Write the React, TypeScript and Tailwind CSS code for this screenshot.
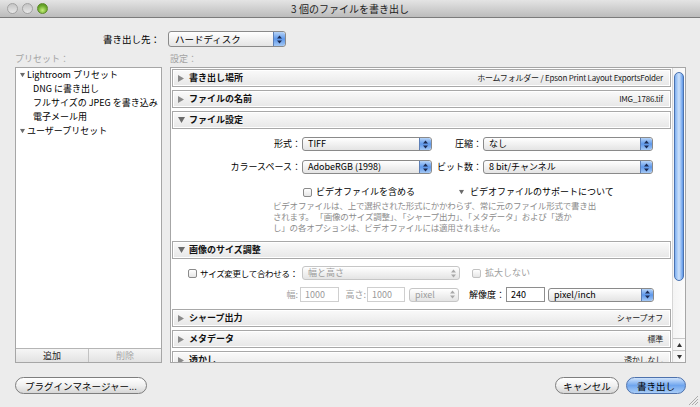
import React from "react";

function Tri({ open, className = "" }: { open?: boolean; className?: string }) {
  return open ? (
    <svg width="7" height="6" viewBox="0 0 7 6" className={className}>
      <path d="M0 0 H7 L3.5 6 Z" fill="#6b6b6b" />
    </svg>
  ) : (
    <svg width="6" height="7" viewBox="0 0 6 7" className={className}>
      <path d="M0 0 L6 3.5 L0 7 Z" fill="#8a8a8a" />
    </svg>
  );
}

function Stepper({ disabled }: { disabled?: boolean }) {
  const c = disabled ? "#a8a8a8" : "#1b2a52";
  return (
    <div
      className={
        disabled
          ? "flex h-full w-[12px] items-center justify-center"
          : "flex h-full w-[12px] items-center justify-center rounded-r-[2px] border-l border-[#5d7fb6] bg-gradient-to-b from-[#b7d4f7] via-[#5d97ea] to-[#a4c8f4]"
      }
    >
      <svg width="5" height="9" viewBox="0 0 5 9">
        <path d="M2.5 0.5 L5 3.5 H0 Z" fill={c} />
        <path d="M0 5.5 H5 L2.5 8.5 Z" fill={c} />
      </svg>
    </div>
  );
}

function Select({ value, className, disabled }: { value: string; className: string; disabled?: boolean }) {
  return (
    <div
      className={`flex h-[14px] shrink-0 items-center overflow-hidden rounded-[3px] border bg-gradient-to-b from-white to-[#e4e4e4] ${
        disabled ? "border-[#c6c6c6] text-[#9c9c9c]" : "border-[#8a8a8a] text-black"
      } ${className}`}
    >
      <span className="flex-1 truncate pl-[5px] text-[9px] leading-[12px]">{value}</span>
      <Stepper disabled={disabled} />
    </div>
  );
}

function Check({ disabled }: { disabled?: boolean }) {
  return (
    <div
      className={`h-[9px] w-[9px] shrink-0 rounded-[2px] border bg-gradient-to-b from-white to-[#e6e6e6] ${
        disabled ? "border-[#c2c2c2]" : "border-[#8a8a8a]"
      }`}
    />
  );
}

function Field({ value, className, disabled }: { value: string; className: string; disabled?: boolean }) {
  return (
    <div
      className={`flex h-[15px] shrink-0 items-center border bg-white pl-[4px] text-[9px] ${
        disabled ? "border-[#cfcfcf] text-[#9a9a9a]" : "border-[#8e8e8e] text-black"
      } ${className}`}
    >
      {value}
    </div>
  );
}

function Header({ title, right, open }: { title: string; right?: string; open?: boolean }) {
  return (
    <div className="flex h-[18px] shrink-0 items-center border border-[#a8a8a8] bg-gradient-to-b from-[#fafafa] to-[#e7e7e7] pl-[5px] pr-[7px] shadow-[inset_0_0_0_1px_#ffffff]">
      <div className="flex w-[11px] items-center">
        <Tri open={open} />
      </div>
      <span className="text-[9px] font-bold leading-[12px] text-[#111]">{title}</span>
      {right && <span className="ml-auto text-[8px] leading-[12px] tracking-[-0.2px] text-[#222]">{right}</span>}
    </div>
  );
}

function Pill({ children, className }: { children: React.ReactNode; className: string }) {
  return (
    <div
      className={`flex h-[17px] items-center justify-center rounded-full border text-[9.5px] leading-[12px] ${className}`}
    >
      {children}
    </div>
  );
}

export default function App() {
  return (
    <div className="relative flex h-[407px] w-[700px] flex-col overflow-hidden whitespace-nowrap bg-[#ececec] font-['Noto_Sans_CJK_JP','Noto_Sans',sans-serif] text-black">
      {/* title bar */}
      <div className="relative flex h-[18px] shrink-0 items-center justify-center border-b border-[#7b7b7b] bg-gradient-to-b from-[#e4e4e4] to-[#bcbcbc]">
        <div className="absolute left-[7px] top-[3px] flex gap-[4px]">
          <div className="h-[11px] w-[11px] rounded-full border border-[#a2a2a2] bg-gradient-to-b from-[#c4c4c4] to-[#e8e8e8]" />
          <div className="h-[11px] w-[11px] rounded-full border border-[#a2a2a2] bg-gradient-to-b from-[#c4c4c4] to-[#e8e8e8]" />
          <div className="h-[11px] w-[11px] rounded-full border border-[#5e8a2a] bg-[radial-gradient(circle_at_50%_70%,#c6f07a,#6aa82a_60%,#4f8a1e)]" />
        </div>
        <span className="text-[10px] leading-[12px] text-[#222]">3&nbsp;個のファイルを書き出し</span>
      </div>

      {/* destination */}
      <div className="mt-[13px] flex h-[16px] items-center">
        <span className="w-[162px] pr-[2px] text-right text-[9.5px] leading-[12px]">書き出し先：</span>
        <div className="ml-[6px] flex h-[16px] w-[118px] items-center overflow-hidden rounded-[3px] border border-[#8a8a8a] bg-gradient-to-b from-white to-[#e4e4e4]">
          <span className="flex-1 pl-[6px] text-[9.5px] leading-[12px]">ハードディスク</span>
          <Stepper />
        </div>
      </div>

      {/* labels */}
      <div className="flex h-[20px] pt-[6px] text-[9px] leading-[12px] text-[#a3a3a3]">
        <span className="ml-[15px] w-[155px]">プリセット：</span>
        <span>設定：</span>
      </div>

      {/* panels */}
      <div className="flex h-[296px] gap-[8px] pl-[15px]">
        {/* left */}
        <div className="flex w-[147px] flex-col border border-[#a6a6a6] bg-white">
          <div className="flex-1 text-[9px] leading-[14px]">
            <div className="flex items-center pl-[3px]">
              <Tri open className="mr-[1px] scale-75" />
              <span>Lightroom プリセット</span>
            </div>
            <div className="pl-[17px]">DNG に書き出し</div>
            <div className="pl-[17px]">フルサイズの JPEG を書き込み</div>
            <div className="pl-[17px]">電子メール用</div>
            <div className="flex items-center pl-[3px]">
              <Tri open className="mr-[1px] scale-75" />
              <span>ユーザープリセット</span>
            </div>
          </div>
          <div className="flex h-[14px] border-t border-[#b5b5b5] bg-gradient-to-b from-[#f6f6f6] to-[#e2e2e2] text-[9px] leading-[12px]">
            <div className="flex w-[73px] items-center justify-center border-r border-[#c2c2c2] text-[#222]">追加</div>
            <div className="flex flex-1 items-center justify-center text-[#a6a6a6]">削除</div>
          </div>
        </div>

        {/* right */}
        <div className="flex w-[516px] border border-[#a6a6a6] bg-white">
          <div className="flex w-[500px] flex-col gap-[3px] overflow-hidden pl-[1px] pt-[1px]">
            <Header title="書き出し場所" right="ホームフォルダー / Epson Print Layout ExportsFolder" />
            <Header title="ファイルの名前" right="IMG_1786.tif" />
            <div className="flex flex-col">
              <Header title="ファイル設定" open />
              <div className="flex h-[109px] flex-col text-[9px] leading-[12px]">
                <div className="mt-[8px] flex items-center">
                  <span className="w-[130px] pr-[1px] text-right">形式：</span>
                  <Select value="TIFF" className="w-[130px]" />
                  <span className="w-[51px] pr-[1px] text-right">圧縮：</span>
                  <Select value="なし" className="w-[170px]" />
                </div>
                <div className="mt-[9px] flex items-center">
                  <span className="w-[130px] pr-[1px] text-right">カラースペース：</span>
                  <Select value="AdobeRGB (1998)" className="w-[130px]" />
                  <span className="w-[51px] pr-[1px] text-right">ビット数：</span>
                  <Select value="8 bit/チャンネル" className="w-[170px]" />
                </div>
                <div className="mt-[12px] flex h-[12px] items-center">
                  <div className="ml-[131px] flex items-center gap-[4px]">
                    <Check />
                    <span>ビデオファイルを含める</span>
                  </div>
                  <div className="ml-[43px] flex items-center gap-[5px]">
                    <Tri open className="scale-75" />
                    <span>ビデオファイルのサポートについて</span>
                  </div>
                </div>
                <div className="ml-[101px] mt-[2px] text-[8.5px] leading-[11px] tracking-[-0.2px] text-[#8c8c8c]">
                  ビデオファイルは、上で選択された形式にかかわらず、常に元のファイル形式で書き出
                  <br />
                  されます。 「画像のサイズ調整」、「シャープ出力」、「メタデータ」および「透か
                  <br />
                  し」の各オプションは、ビデオファイルには適用されません。
                </div>
              </div>
            </div>
            <div className="flex flex-col">
              <Header title="画像のサイズ調整" open />
              <div className="flex h-[47px] flex-col text-[9px] leading-[12px]">
                <div className="mt-[7px] flex items-center">
                  <div className="ml-[16px] flex w-[114px] items-center gap-[3px]">
                    <Check />
                    <span className="text-[8.5px] tracking-[-0.3px]">サイズ変更して合わせる：</span>
                  </div>
                  <Select value="幅と高さ" className="w-[158px]" disabled />
                  <div className="ml-[12px] flex items-center gap-[4px] text-[#a0a0a0]">
                    <Check disabled />
                    <span>拡大しない</span>
                  </div>
                </div>
                <div className="mt-[7px] flex items-center">
                  <span className="w-[128px] pr-[2px] text-right text-[#a0a0a0]">幅:</span>
                  <Field value="1000" className="w-[39px]" disabled />
                  <span className="w-[28px] pr-[1px] text-right text-[#a0a0a0]">高さ:</span>
                  <Field value="1000" className="w-[38px]" disabled />
                  <Select value="pixel" className="ml-[4px] w-[50px]" disabled />
                  <span className="w-[47px] pr-[1px] text-right">解像度：</span>
                  <Field value="240" className="w-[39px]" />
                  <Select value="pixel/inch" className="ml-[3px] w-[106px]" />
                </div>
              </div>
            </div>
            <Header title="シャープ出力" right="シャープオフ" />
            <Header title="メタデータ" right="標準" />
            <Header title="透かし" right="透かしなし" />
          </div>
          {/* scrollbar */}
          <div className="ml-[1px] flex w-[13px] flex-col border-l border-[#d6d6d6] bg-gradient-to-r from-[#f4f4f4] to-[#fbfbfb]">
            <div className="mx-auto mt-[4px] h-[209px] w-[10px] rounded-full border border-[#4a72b0] bg-gradient-to-r from-[#7fb0f0] via-[#cfe3fb] to-[#5f98e8]" />
            <div className="flex-1" />
            <div className="flex h-[12px] items-center justify-center border-t border-[#c8c8c8]">
              <svg width="5" height="4" viewBox="0 0 5 4">
                <path d="M2.5 0 L5 4 H0 Z" fill="#333" />
              </svg>
            </div>
            <div className="flex h-[12px] items-center justify-center border-t border-[#c8c8c8]">
              <svg width="5" height="4" viewBox="0 0 5 4">
                <path d="M0 0 H5 L2.5 4 Z" fill="#333" />
              </svg>
            </div>
          </div>
        </div>
      </div>

      {/* bottom buttons */}
      <div className="mt-[14px] flex items-center pl-[15px]">
        <Pill className="w-[132px] border-[#7e7e7e] bg-gradient-to-b from-white via-[#f0f0f0] to-[#d6d6d6]">
          プラグインマネージャー...
        </Pill>
        <Pill className="ml-auto w-[64px] border-[#7e7e7e] bg-gradient-to-b from-white via-[#f0f0f0] to-[#d6d6d6]">
          キャンセル
        </Pill>
        <Pill className="ml-[7px] mr-[14px] w-[60px] border-[#4e72ad] bg-gradient-to-b from-[#cfe3fb] via-[#6fa5ee] to-[#a9cdf7]">
          書き出し
        </Pill>
      </div>

      {/* resize grip */}
      <svg className="absolute bottom-[2px] right-[2px]" width="10" height="10" viewBox="0 0 10 10">
        <path d="M10 1 L1 10 M10 4 L4 10 M10 7 L7 10" stroke="#9a9a9a" strokeWidth="0.8" />
      </svg>
    </div>
  );
}
